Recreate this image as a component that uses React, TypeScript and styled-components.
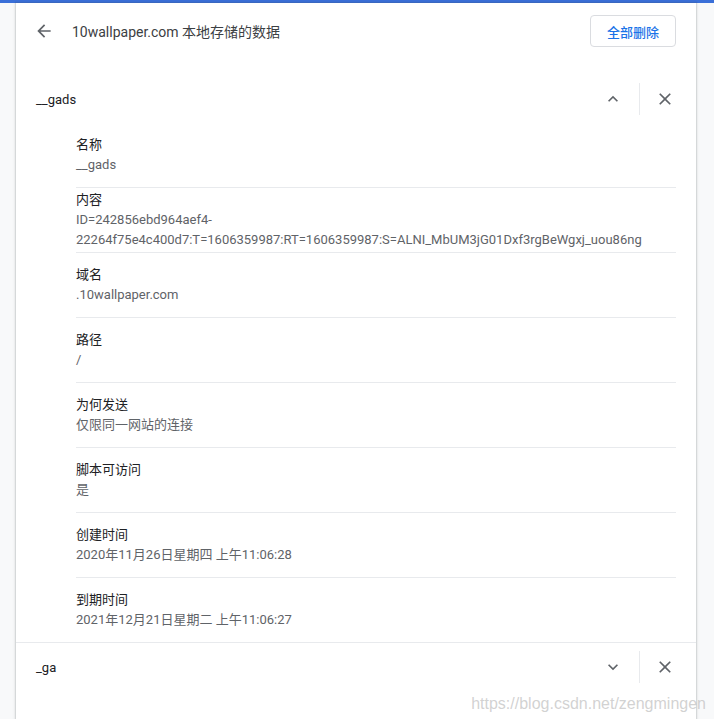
import React, { useState } from 'react';
import styled, { createGlobalStyle } from 'styled-components';

const GlobalStyle = createGlobalStyle`
  html, body { margin: 0; padding: 0; }
  body {
    background: #f8f9fa;
    font-family: Roboto, "Noto Sans CJK SC", sans-serif;
    font-size: 13px;
    color: #202124;
    overflow: hidden;
  }
`;

type Field = { label: string; value: string };

const gadsFields: Field[] = [
  { label: '名称', value: '__gads' },
  {
    label: '内容',
    value:
      'ID=242856ebd964aef4-22264f75e4c400d7:T=1606359987:RT=1606359987:S=ALNI_MbUM3jG01Dxf3rgBeWgxj_uou86ng',
  },
  { label: '域名', value: '.10wallpaper.com' },
  { label: '路径', value: '/' },
  { label: '为何发送', value: '仅限同一网站的连接' },
  { label: '脚本可访问', value: '是' },
  { label: '创建时间', value: '2020年11月26日星期四 上午11:06:28' },
  { label: '到期时间', value: '2021年12月21日星期二 上午11:06:27' },
];

const ArrowBack = () => (
  <svg width="20" height="20" viewBox="0 0 24 24" fill="#5f6368">
    <path d="M20 11H7.83l5.59-5.59L12 4l-8 8 8 8 1.41-1.41L7.83 13H20v-2z" />
  </svg>
);

const Chevron = ({ up }: { up: boolean }) => (
  <svg width="20" height="20" viewBox="0 0 24 24" fill="#5f6368">
    {up ? (
      <path d="M12 8l-6 6 1.41 1.41L12 10.83l4.59 4.58L18 14z" />
    ) : (
      <path d="M16.59 8.59L12 13.17 7.41 8.59 6 10l6 6 6-6z" />
    )}
  </svg>
);

const CloseIcon = () => (
  <svg width="20" height="20" viewBox="0 0 24 24" fill="#5f6368">
    <path d="M19 6.41L17.59 5 12 10.59 6.41 5 5 6.41 10.59 12 5 17.59 6.41 19 12 13.41 17.59 19 19 17.59 13.41 12z" />
  </svg>
);

const CookieEntry: React.FC<{ name: string; fields: Field[]; open?: boolean }> = ({
  name,
  fields,
  open = false,
}) => {
  const [expanded, setExpanded] = useState(open);
  return (
    <Entry>
      <EntryRow>
        <EntryName>{name}</EntryName>
        <IconButton onClick={() => setExpanded(!expanded)}>
          <Chevron up={expanded} />
        </IconButton>
        <Divider />
        <IconButton>
          <CloseIcon />
        </IconButton>
      </EntryRow>
      {expanded && (
        <Details>
          {fields.map((f) => (
            <DetailItem key={f.label}>
              <div>
                <DetailLabel>{f.label}</DetailLabel>
                <DetailValue>{f.value}</DetailValue>
              </div>
            </DetailItem>
          ))}
        </Details>
      )}
    </Entry>
  );
};

const App: React.FC = () => (
  <>
    <GlobalStyle />
    <TopBar />
    <Card>
      <Header>
        <BackButton>
          <ArrowBack />
        </BackButton>
        <Title>10wallpaper.com 本地存储的数据</Title>
        <RemoveAll>全部删除</RemoveAll>
      </Header>
      <List>
        <CookieEntry name="__gads" fields={gadsFields} open />
        <CookieEntry name="_ga" fields={[]} />
      </List>
    </Card>
    <Watermark>https://blog.csdn.net/zengmingen</Watermark>
  </>
);

const TopBar = styled.div`
  height: 3px;
  background: #3a6fd8;
`;

const Card = styled.main`
  width: 680px;
  margin-left: 16px;
  min-height: 716px;
  background: #fff;
  box-shadow: 0 0 1px 1px rgba(60, 64, 67, 0.12), 0 1px 3px 1px rgba(60, 64, 67, 0.1);
`;

const Header = styled.header`
  height: 56px;
  display: flex;
  align-items: center;
  padding: 0 20px 0 8px;
`;

const BackButton = styled.button`
  width: 40px;
  height: 40px;
  border: none;
  background: none;
  padding: 0;
  display: flex;
  align-items: center;
  justify-content: center;
  cursor: pointer;
`;

const Title = styled.h1`
  flex: 1;
  margin: 0 0 0 8px;
  font-size: 14px;
  font-weight: 400;
  color: #3c4043;
`;

const RemoveAll = styled.button`
  height: 32px;
  padding: 0 16px;
  border: 1px solid #dadce0;
  border-radius: 4px;
  background: #fff;
  color: #1a73e8;
  font-family: Roboto, "Noto Sans CJK SC", sans-serif;
  font-size: 13px;
  font-weight: 500;
  cursor: pointer;
`;

const List = styled.section`
  margin-top: 16px;
`;

const Entry = styled.div`
  & + & {
    border-top: 1px solid #e8eaed;
  }
`;

const EntryRow = styled.div`
  height: 48px;
  display: flex;
  align-items: center;
  padding: 0 13px 0 20px;
`;

const EntryName = styled.div`
  flex: 1;
  color: #202124;
`;

const IconButton = styled.button`
  width: 36px;
  height: 36px;
  border: none;
  background: none;
  padding: 0;
  display: flex;
  align-items: center;
  justify-content: center;
  cursor: pointer;
`;

const Divider = styled.div`
  width: 1px;
  height: 32px;
  background: #e8eaed;
  margin: 0 7px 0 8px;
`;

const Details = styled.div`
  padding: 0 20px 0 60px;
`;

const DetailItem = styled.div`
  min-height: 64px;
  display: flex;
  align-items: center;
  & + & {
    border-top: 1px solid #e8eaed;
  }
`;

const DetailLabel = styled.div`
  line-height: 20px;
  color: #202124;
`;

const DetailValue = styled.div`
  line-height: 20px;
  color: #5f6368;
`;

const Watermark = styled.div`
  position: absolute;
  right: 8px;
  bottom: 6px;
  font-family: "Liberation Sans", Arial, sans-serif;
  font-size: 16px;
  color: rgba(190, 190, 190, 0.7);
  pointer-events: none;
`;

export default App;
